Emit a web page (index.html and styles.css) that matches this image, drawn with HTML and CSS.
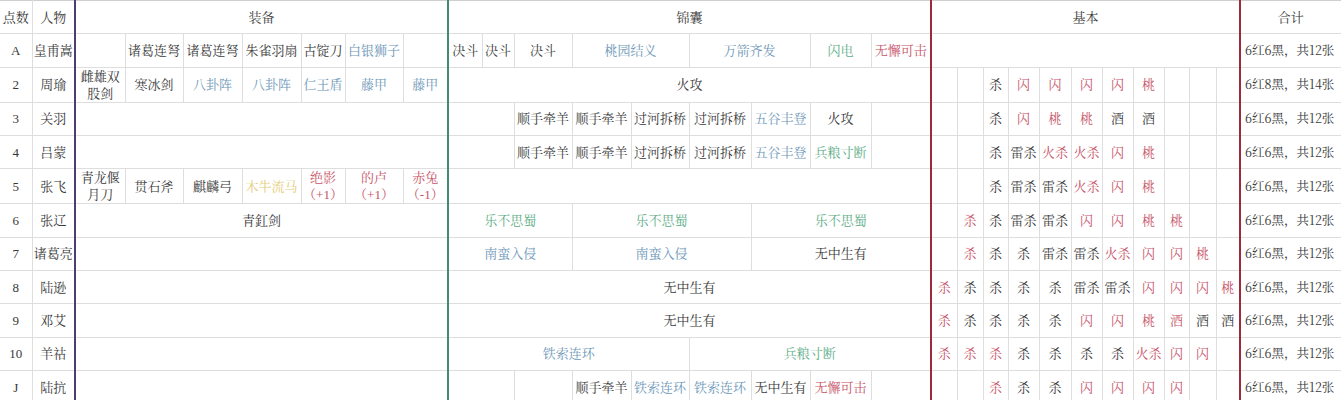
FILE: index.html
```html
<!DOCTYPE html>
<html lang="zh">
<head>
<meta charset="utf-8">
<title>牌表</title>
<link rel="stylesheet" href="styles.css">
</head>
<body>
<table class="sheet">
<colgroup>
<col><col>
<col><col><col><col><col><col><col>
<col><col><col><col><col><col><col><col><col>
<col><col><col><col><col><col><col><col><col><col><col>
<col>
</colgroup>
<tbody>
<tr>
<td>点数</td><td>人物</td>
<td class="p" colspan="7">装备</td>
<td class="gl" colspan="9">锦囊</td>
<td class="rl" colspan="11">基本</td>
<td class="rl">合计</td>
</tr>
<tr>
<td>A</td><td>皇甫嵩</td>
<td class="p"></td><td>诸葛连弩</td><td>诸葛连弩</td><td>朱雀羽扇</td><td>古锭刀</td><td class="b">白银狮子</td><td></td>
<td class="gl">决斗</td><td>决斗</td><td>决斗</td><td class="b" colspan="2">桃园结义</td><td class="b" colspan="2">万箭齐发</td><td class="g">闪电</td><td class="r">无懈可击</td>
<td class="rl" colspan="11"></td>
<td class="rl sum">6红6黑，共12张</td>
</tr>
<tr>
<td>2</td><td>周瑜</td>
<td class="p">雌雄双<br>股剑</td><td>寒冰剑</td><td class="b">八卦阵</td><td class="b">八卦阵</td><td class="b">仁王盾</td><td class="b">藤甲</td><td class="b">藤甲</td>
<td class="gl" colspan="9">火攻</td>
<td class="rl"></td><td></td><td>杀</td><td class="r">闪</td><td class="r">闪</td><td class="r">闪</td><td class="r">闪</td><td class="r">桃</td><td></td><td></td><td></td>
<td class="rl sum">6红8黑，共14张</td>
</tr>
<tr>
<td>3</td><td>关羽</td>
<td class="p" colspan="7"></td>
<td class="gl" colspan="2"></td><td>顺手牵羊</td><td>顺手牵羊</td><td>过河拆桥</td><td>过河拆桥</td><td class="b">五谷丰登</td><td>火攻</td><td></td>
<td class="rl"></td><td></td><td>杀</td><td class="r">闪</td><td class="r">桃</td><td class="r">桃</td><td>酒</td><td>酒</td><td></td><td></td><td></td>
<td class="rl sum">6红6黑，共12张</td>
</tr>
<tr>
<td>4</td><td>吕蒙</td>
<td class="p" colspan="7"></td>
<td class="gl" colspan="2"></td><td>顺手牵羊</td><td>顺手牵羊</td><td>过河拆桥</td><td>过河拆桥</td><td class="b">五谷丰登</td><td class="g">兵粮寸断</td><td></td>
<td class="rl"></td><td></td><td>杀</td><td>雷杀</td><td class="r">火杀</td><td class="r">火杀</td><td class="r">闪</td><td class="r">桃</td><td></td><td></td><td></td>
<td class="rl sum">6红6黑，共12张</td>
</tr>
<tr>
<td>5</td><td>张飞</td>
<td class="p">青龙偃<br>月刀</td><td>贯石斧</td><td>麒麟弓</td><td class="y">木牛流马</td><td class="r">绝影<br>（+1）</td><td class="r">的卢<br>（+1）</td><td class="r">赤兔<br>（-1）</td>
<td class="gl" colspan="9"></td>
<td class="rl"></td><td></td><td>杀</td><td>雷杀</td><td>雷杀</td><td class="r">火杀</td><td class="r">闪</td><td class="r">桃</td><td></td><td></td><td></td>
<td class="rl sum">6红6黑，共12张</td>
</tr>
<tr>
<td>6</td><td>张辽</td>
<td class="p" colspan="7">青釭剑</td>
<td class="gl g" colspan="3">乐不思蜀</td><td class="g" colspan="3">乐不思蜀</td><td class="g" colspan="3">乐不思蜀</td>
<td class="rl"></td><td class="r">杀</td><td>杀</td><td>雷杀</td><td>雷杀</td><td class="r">闪</td><td class="r">闪</td><td class="r">桃</td><td class="r">桃</td><td></td><td></td>
<td class="rl sum">6红6黑，共12张</td>
</tr>
<tr>
<td>7</td><td>诸葛亮</td>
<td class="p" colspan="7"></td>
<td class="gl b" colspan="3">南蛮入侵</td><td class="b" colspan="3">南蛮入侵</td><td colspan="3">无中生有</td>
<td class="rl"></td><td class="r">杀</td><td>杀</td><td>杀</td><td>雷杀</td><td>雷杀</td><td class="r">火杀</td><td class="r">闪</td><td class="r">闪</td><td class="r">桃</td><td></td>
<td class="rl sum">6红6黑，共12张</td>
</tr>
<tr>
<td>8</td><td>陆逊</td>
<td class="p" colspan="7"></td>
<td class="gl" colspan="9">无中生有</td>
<td class="rl r">杀</td><td>杀</td><td>杀</td><td>杀</td><td>杀</td><td>雷杀</td><td>雷杀</td><td class="r">闪</td><td class="r">闪</td><td class="r">闪</td><td class="r">桃</td>
<td class="rl sum">6红6黑，共12张</td>
</tr>
<tr>
<td>9</td><td>邓艾</td>
<td class="p" colspan="7"></td>
<td class="gl" colspan="9">无中生有</td>
<td class="rl r">杀</td><td>杀</td><td>杀</td><td>杀</td><td>杀</td><td class="r">闪</td><td class="r">闪</td><td class="r">桃</td><td class="r">酒</td><td>酒</td><td>酒</td>
<td class="rl sum">6红6黑，共12张</td>
</tr>
<tr>
<td>10</td><td>羊祜</td>
<td class="p" colspan="7"></td>
<td class="gl b" colspan="5">铁索连环</td><td class="g" colspan="4">兵粮寸断</td>
<td class="rl r">杀</td><td class="r">杀</td><td class="r">杀</td><td>杀</td><td>杀</td><td>杀</td><td>杀</td><td class="r">火杀</td><td class="r">闪</td><td class="r">闪</td><td></td>
<td class="rl sum">6红6黑，共12张</td>
</tr>
<tr>
<td>J</td><td>陆抗</td>
<td class="p" colspan="7"></td>
<td class="gl" colspan="2"></td><td></td><td>顺手牵羊</td><td class="b">铁索连环</td><td class="b">铁索连环</td><td>无中生有</td><td class="r">无懈可击</td><td></td>
<td class="rl"></td><td></td><td class="r">杀</td><td>杀</td><td>杀</td><td class="r">闪</td><td class="r">闪</td><td class="r">闪</td><td class="r">闪</td><td></td><td></td>
<td class="rl sum">6红6黑，共12张</td>
</tr>
</tbody>
</table>
</body>
</html>
```

FILE: styles.css
```css
html, body {
  margin: 0;
  padding: 0;
  background: #ffffff;
  overflow: hidden;
}

.sheet {
  table-layout: fixed;
  border-collapse: collapse;
  width: 1341px;
  height: 400px;
  font-family: "Liberation Serif", "Noto Serif CJK SC", "Noto Sans CJK SC", serif;
  font-size: 13px;
  color: #383838;
}

.sheet col:nth-child(1) { width: 32px; }
.sheet col:nth-child(2) { width: 43px; }
.sheet col:nth-child(3) { width: 50px; }
.sheet col:nth-child(4) { width: 58px; }
.sheet col:nth-child(5) { width: 59px; }
.sheet col:nth-child(6) { width: 59px; }
.sheet col:nth-child(7) { width: 44px; }
.sheet col:nth-child(8) { width: 58px; }
.sheet col:nth-child(9) { width: 45px; }
.sheet col:nth-child(10) { width: 34px; }
.sheet col:nth-child(11) { width: 32px; }
.sheet col:nth-child(12) { width: 58px; }
.sheet col:nth-child(13) { width: 59px; }
.sheet col:nth-child(14) { width: 58px; }
.sheet col:nth-child(15) { width: 62px; }
.sheet col:nth-child(16) { width: 59px; }
.sheet col:nth-child(17) { width: 61px; }
.sheet col:nth-child(18) { width: 60px; }
.sheet col:nth-child(19) { width: 26px; }
.sheet col:nth-child(20) { width: 26px; }
.sheet col:nth-child(21) { width: 25px; }
.sheet col:nth-child(22) { width: 31px; }
.sheet col:nth-child(23) { width: 32px; }
.sheet col:nth-child(24) { width: 31px; }
.sheet col:nth-child(25) { width: 31px; }
.sheet col:nth-child(26) { width: 31px; }
.sheet col:nth-child(27) { width: 25px; }
.sheet col:nth-child(28) { width: 27px; }
.sheet col:nth-child(29) { width: 24px; }
.sheet col:nth-child(30) { width: 101px; }

.sheet tr {
  height: 33.33px;
}

.sheet td {
  border: 1px solid #dedede;
  padding: 0;
  text-align: center;
  vertical-align: middle;
  line-height: 17px;
  white-space: nowrap;
  overflow: hidden;
}

.sheet tr:first-child td {
  border-top-color: #cfcfcf;
}

.sheet td:first-child {
  border-left: none;
}

.sheet td.p { border-left: 2px solid #4d3d70; }
.sheet td.gl { border-left: 2px solid #3f8c72; }
.sheet td.rl { border-left: 2px solid #9c2a3c; }

.sheet td.sum {
  font-family: "Noto Serif CJK SC", "Liberation Serif", serif;
  font-size: 12.5px;
  font-kerning: none;
  letter-spacing: 0;
  text-align: left;
  padding-left: 4px;
}

.b { color: #6d97b8; }
.g { color: #5cad86; }
.r { color: #c75468; }
.y { color: #e4cc76; }
```
